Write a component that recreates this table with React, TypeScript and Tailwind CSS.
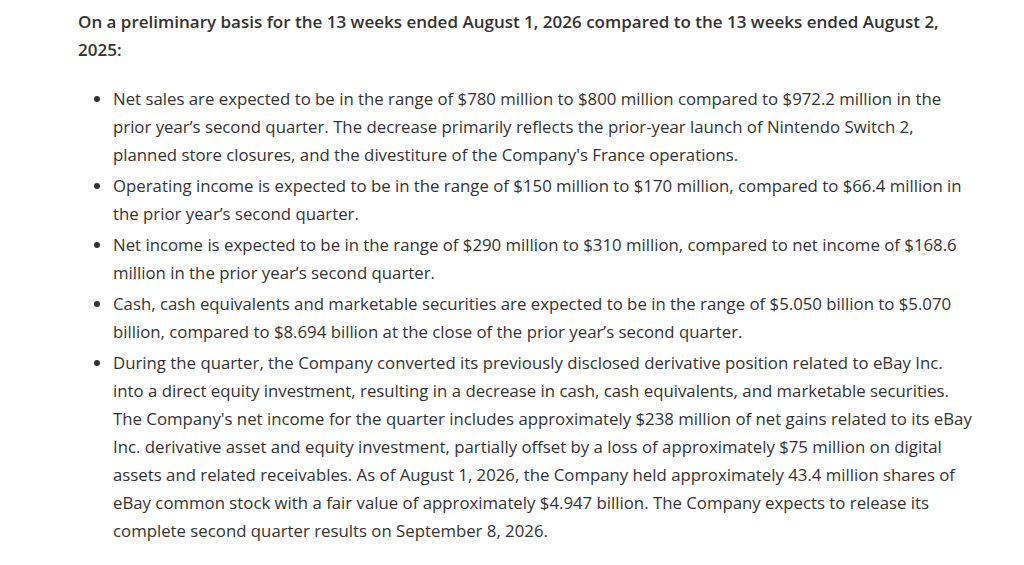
const items = [
  "Net sales are expected to be in the range of $780 million to $800 million compared to $972.2 million in the prior year\u2019s second quarter. The decrease primarily reflects the prior-year launch of Nintendo Switch 2, planned store closures, and the divestiture of the Company's France operations.",
  "Operating income is expected to be in the range of $150 million to $170 million, compared to $66.4 million in the prior year\u2019s second quarter.",
  "Net income is expected to be in the range of $290 million to $310 million, compared to net income of $168.6 million in the prior year\u2019s second quarter.",
  "Cash, cash equivalents and marketable securities are expected to be in the range of $5.050 billion to $5.070 billion, compared to $8.694 billion at the close of the prior year\u2019s second quarter.",
  "During the quarter, the Company converted its previously disclosed derivative position related to eBay Inc. into a direct equity investment, resulting in a decrease in cash, cash equivalents, and marketable securities. The Company's net income for the quarter includes approximately $238 million of net gains related to its eBay Inc. derivative asset and equity investment, partially offset by a loss of approximately $75 million on digital assets and related receivables. As of August 1, 2026, the Company held approximately 43.4 million shares of eBay common stock with a fair value of approximately $4.947 billion. The Company expects to release its complete second quarter results on September 8, 2026.",
]

export default function App() {
  return (
    <div className="min-h-screen bg-white pl-[78px] pt-[8px] font-['Open_Sans',sans-serif] text-[#333333]">
      <p className="w-[900px] text-[17px] font-semibold leading-[28px]">
        On a preliminary basis for the 13 weeks ended August 1, 2026 compared to the 13 weeks ended August 2, 2025:
      </p>
      <ul className="mt-[21px] flex w-[897px] list-disc flex-col gap-[3px] pl-[35px] text-[16.8px] leading-[28px]">
        {items.map((text, i) => (
          <li key={i}>{text}</li>
        ))}
      </ul>
    </div>
  )
}
